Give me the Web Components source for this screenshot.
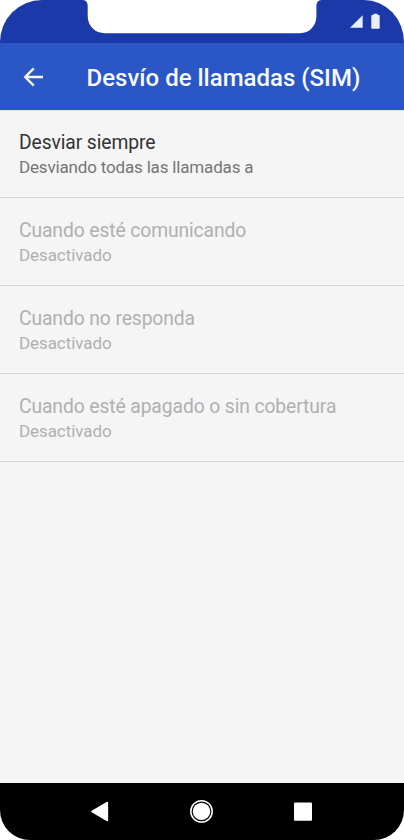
<!DOCTYPE html>
<html lang="es">
<head>
<meta charset="utf-8">
<title>Desvío de llamadas (SIM)</title>
<style>
html,body{margin:0;background:#fff}
body{font-family:Roboto,"Noto Sans",sans-serif;width:404px;height:840px;overflow:hidden}
</style>
</head>
<body>
<phone-screen>
  <status-bar></status-bar>
  <app-bar>Desvío de llamadas (SIM)</app-bar>
  <setting-row><span slot="title">Desviar siempre</span>Desviando todas las llamadas a</setting-row>
  <setting-row disabled><span slot="title">Cuando esté comunicando</span>Desactivado</setting-row>
  <setting-row disabled><span slot="title">Cuando no responda</span>Desactivado</setting-row>
  <setting-row disabled><span slot="title">Cuando esté apagado o sin cobertura</span>Desactivado</setting-row>
  <nav-bar slot="nav"></nav-bar>
</phone-screen>
<script>
const define = (name, html) => customElements.define(name, class extends HTMLElement {
  constructor() {
    super();
    this.attachShadow({ mode: 'open' }).innerHTML = html;
  }
});

define('phone-screen', `
<style>
:host{display:flex;flex-direction:column;box-sizing:border-box;width:403.6px;height:839.6px;background:#f5f5f5;overflow:hidden;
 border-radius:42px 40px 30px 30px / 42px 42px 30px 30px}
main{flex:1;display:flex;flex-direction:column}
</style>
<main><slot></slot></main><slot name="nav"></slot>`);

define('status-bar', `
<style>:host{display:block;height:43px;background:#1b39a9}svg{display:block}</style>
<svg width="404" height="43" viewBox="0 0 404 43">
<path d="M83 0Q87.700 .6 87.700 6V16C87.700 26 95 33.200 105 33.200H300C309.500 33.200 316.400 26 316.400 16V6Q316.400 .6 321.500 0Z" fill="#fff"/>
<path d="M362.700 15.300V27.800H350Z" fill="#e9eefb"/>
<path d="M371.300 16q0-1 1-1h1.200v-1.200h4V15h1.200q1 0 1 1v11.800q0 1-1 1h-6.400q-1 0-1-1Z" fill="#e9eefb"/>
</svg>`);

define('app-bar', `
<style>
:host{display:flex;align-items:center;box-sizing:border-box;height:67px;background:#2a56c6;color:#f7faff;box-shadow:0 1px 1px #0001;
 font-size:24px;font-weight:500;line-height:28px;white-space:nowrap}
svg{flex:none;margin:0 42.500px 0 23px}
span{padding-top:3px}
</style>
<svg width="21" height="20" viewBox="0 0 21 20"><path d="M20 10H2.500M10.800 1.300L2.200 10L10.800 18.700" fill="none" stroke="#f3f7ff" stroke-width="2.400"/></svg>
<span><slot></slot></span>`);

define('setting-row', `
<style>
:host{display:flex;flex-direction:column;box-sizing:border-box;height:88px;padding:21px 19px 0;border-bottom:1px solid #d3d3d3;
 color:#757575;font-size:17px;line-height:24px;letter-spacing:-.17px;white-space:nowrap}
.t{font-size:19.300px;line-height:23px;margin-bottom:1px;color:#333;letter-spacing:-.1px}
:host([disabled]),:host([disabled]) .t{color:#b0b0b0}
:host([disabled]){letter-spacing:-.08px}
</style>
<div class="t"><slot name="title"></slot></div><div><slot></slot></div>`);

define('nav-bar', `
<style>:host{display:block;height:57px;background:#000}svg{display:block}</style>
<svg width="404" height="57" viewBox="0 0 404 57" fill="#fff">
<path d="M107.400 19.500L92 28.500L107.400 37.500Z" stroke="#fff" stroke-width="1.500" stroke-linejoin="round"/>
<circle cx="201.500" cy="28.400" r="8.700"/>
<circle cx="201.500" cy="28.400" r="10.700" fill="none" stroke="#fff" stroke-width="1.500"/>
<rect x="294" y="19.400" width="18" height="18.400" rx="1"/>
</svg>`);
</script>
</body>
</html>
